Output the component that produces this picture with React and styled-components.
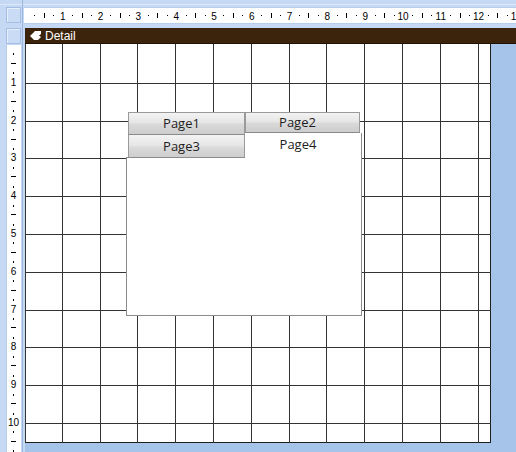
import React from "react";
import styled, { createGlobalStyle } from "styled-components";

const Global = createGlobalStyle`
  html, body { margin: 0; padding: 0; background: #c5d9f4; }
  * { box-sizing: border-box; }
`;

const CM = 37.8;

const Frame = styled.div`
  width: 516px;
  height: 452px;
  overflow: hidden;
  display: grid;
  grid-template-columns: 25px 491px;
  grid-template-rows: 28px 16px 408px;
  background:
    linear-gradient(to right, transparent 22px, #9ab5de 22px, #9ab5de 23px, transparent 23px),
    linear-gradient(to bottom, transparent 4px, #dde9f8 4px, #dde9f8 5px, transparent 5px),
    #c5d9f4;
`;

const CornerBox = styled.div`
  margin: ${(p) => p.$m};
  width: 15px;
  height: 16px;
  background: #cadcf5;
  border: 1px solid #a3bde3;
  box-shadow: inset 1px 1px 0 #e6eefa;
`;

const HRulerWrap = styled.div`
  margin-top: 7px;
  margin-left: -1px;
  height: 17px;
  background: #ffffff;
  border-top: 1px solid #b7cdee;
  border-bottom: 1px solid #b7cdee;
`;

const DetailBar = styled.div`
  display: flex;
  align-items: center;
  gap: 3px;
  height: 16px;
  padding-left: 5px;
  background: #3c240c;
  border-bottom: 1px solid #201204;
  color: #ffffff;
  font-family: "Liberation Sans", Arial, sans-serif;
  font-size: 12px;
`;

const VRulerWrap = styled.div`
  margin: 1px 0 0 6px;
  width: 15px;
  height: 407px;
  background: #ffffff;
  border-left: 1px solid #b7cdee;
`;

const Canvas = styled.div`
  position: relative;
  background: #a6c3ea;
`;

const GridArea = styled.div`
  position: relative;
  width: 466px;
  height: 399px;
  background: #ffffff;
  border-right: 1px solid #1e1e1e;
  border-bottom: 1px solid #1e1e1e;
`;

const GridSvg = styled.svg`
  position: absolute;
  left: 0;
  top: 0;
  display: block;
`;

const TabControl = styled.div`
  position: absolute;
  left: 101px;
  top: 68px;
  width: 236px;
  display: flex;
  flex-direction: column;
  font-family: "Open Sans", "Noto Sans", sans-serif;
  font-size: 13px;
  color: #1e1e1e;
`;

const TabRow = styled.div`
  display: flex;
  align-items: flex-start;
  height: ${(p) => p.$h}px;
  padding-left: 2px;
`;

const Tab = styled.div`
  display: flex;
  align-items: center;
  justify-content: center;
  padding-right: 10px;
  width: ${(p) => p.$w}px;
  height: ${(p) => p.$h}px;
  background: linear-gradient(#f3f3f3 0%, #e6e6e6 45%, #d9d9d9 55%, #cdcdcd 100%);
  border: 1px solid #9a9a9a;
  border-top-width: ${(p) => (p.$noTop ? 0 : 1)}px;
  border-bottom-width: ${(p) => (p.$noBottom ? 0 : 1)}px;
  border-bottom-color: #8a8a8a;
  line-height: 1;
`;

const ActiveTab = styled.div`
  position: relative;
  z-index: 1;
  display: flex;
  align-items: flex-start;
  justify-content: center;
  padding: 5px 10px 0 0;
  width: 117px;
  height: 25px;
  margin-top: -2px;
  background: #ffffff;
  border-right: 1px solid #8c8c8c;
  line-height: 1;
`;

const Body = styled.div`
  margin-top: -1px;
  height: 159px;
  background: #ffffff;
  border: 1px solid #8c8c8c;
`;

function HRuler() {
  const items = [];
  for (let k = 0; k <= 13; k++) {
    const b = 1 + CM * k;
    if (k > 0)
      items.push(
        <text key={"n" + k} x={b} y={11.5} textAnchor="middle">
          {k}
        </text>
      );
    const q1 = Math.round(b + CM / 4);
    const q2 = Math.round(b + CM / 2);
    const q3 = Math.round(b + (3 * CM) / 4);
    items.push(<rect key={"a" + k} x={q1} y={7} width={1} height={1} />);
    items.push(<rect key={"b" + k} x={q2} y={5} width={1} height={5} />);
    items.push(<rect key={"c" + k} x={q3} y={7} width={1} height={1} />);
  }
  return (
    <svg width="492" height="15" style={{ display: "block" }} fill="#000" fontFamily="'Liberation Sans', Arial, sans-serif" fontSize="10">
      {items}
    </svg>
  );
}

function VRuler() {
  const items = [];
  for (let k = 0; k <= 11; k++) {
    const b = CM * k - 1;
    if (k > 0)
      items.push(
        <text key={"n" + k} x={6.5} y={b + 4} textAnchor="middle">
          {k}
        </text>
      );
    const q1 = Math.round(b + CM / 4);
    const q2 = Math.round(b + CM / 2);
    const q3 = Math.round(b + (3 * CM) / 4);
    items.push(<rect key={"a" + k} x={6} y={q1} width={1} height={2} />);
    items.push(<rect key={"b" + k} x={4} y={q2} width={5} height={1} />);
    items.push(<rect key={"c" + k} x={6} y={q3} width={1} height={2} />);
  }
  return (
    <svg width="14" height="407" style={{ display: "block" }} fill="#000" fontFamily="'Liberation Sans', Arial, sans-serif" fontSize="10">
      {items}
    </svg>
  );
}

const VX = [0, 37, 75, 112, 150, 188, 226, 264, 301, 339, 377, 415, 453];
const HY = [39, 77, 114, 152, 190, 228, 266, 303, 341, 379];

function GridLines() {
  return (
    <GridSvg width="466" height="399" shapeRendering="crispEdges">
      {VX.map((x) => (
        <rect key={"v" + x} x={x} y={0} width={1} height={399} fill="#333" />
      ))}
      {HY.map((y) => (
        <rect key={"h" + y} x={0} y={y} width={466} height={1} fill="#333" />
      ))}
    </GridSvg>
  );
}

function SectionIcon() {
  return (
    <svg width="12" height="11" viewBox="0 0 12 11" style={{ display: "block" }}>
      <path d="M0 6 L5 1 L11 1 L11 4 L9 5.5 L11 7 L8 10 L4 10 Z" fill="#fff" />
    </svg>
  );
}

export default function App() {
  return (
    <>
      <Global />
      <Frame>
        <CornerBox $m="7px 0 0 6px" />
        <HRulerWrap>
          <HRuler />
        </HRulerWrap>
        <CornerBox $m="0 0 0 6px" />
        <DetailBar>
          <SectionIcon />
          <span>Detail</span>
        </DetailBar>
        <VRulerWrap>
          <VRuler />
        </VRulerWrap>
        <Canvas>
          <GridArea>
            <GridLines />
            <TabControl>
              <TabRow $h={23}>
                <Tab $w={117} $h={23}>Page1</Tab>
                <Tab $w={115} $h={21}>Page2</Tab>
              </TabRow>
              <TabRow $h={23}>
                <Tab $w={117} $h={23} $noTop $noBottom>Page3</Tab>
                <ActiveTab>Page4</ActiveTab>
              </TabRow>
              <Body />
            </TabControl>
          </GridArea>
        </Canvas>
      </Frame>
    </>
  );
}
